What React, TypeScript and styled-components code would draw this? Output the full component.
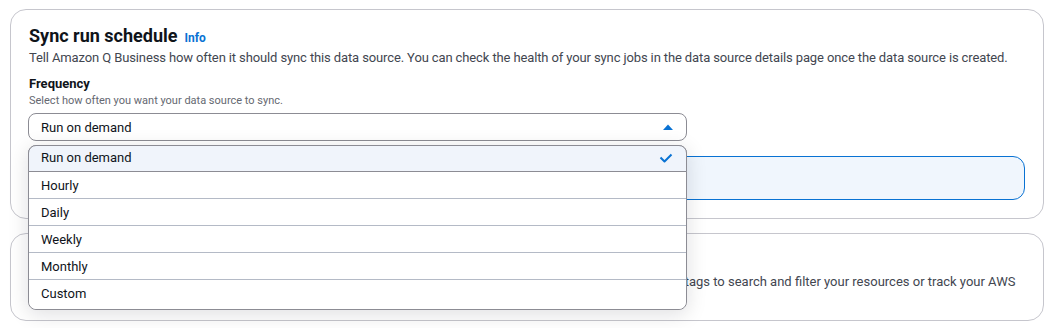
import React from "react";
import styled, { createGlobalStyle } from "styled-components";

const GlobalStyle = createGlobalStyle`
  html, body { margin: 0; padding: 0; background: #ffffff; }
  body { font-family: Roboto, "Noto Sans", sans-serif; color: #0f141a; }
  * { box-sizing: border-box; }
`;

const Page = styled.div`
  display: flex;
  flex-direction: column;
  gap: 14px;
  padding: 9px 10px;
  width: 1054px;
`;

const Container = styled.section<{ $pb?: number }>`
  position: relative;
  border: 1px solid #c6c6cd;
  border-radius: 16px;
  padding: 14px 18px ${(p) => p.$pb ?? 18}px 18px;
  background: #ffffff;
`;

const HeaderRow = styled.div`
  display: flex;
  align-items: baseline;
  gap: 7px;
`;

const Title = styled.h2`
  margin: 0;
  font-size: 18px;
  line-height: 24px;
  font-weight: 700;
  color: #0f141a;
`;

const InfoLink = styled.a`
  font-size: 12px;
  font-weight: 700;
  color: #0972d3;
  text-decoration: none;
`;

const Description = styled.p<{ $tight?: boolean }>`
  margin: 0;
  font-size: 13px;
  line-height: 20px;
  color: #424650;
  letter-spacing: ${(p) => (p.$tight ? "-0.12px" : "0")};
`;

const Field = styled.div`
  display: flex;
  flex-direction: column;
  margin-top: 7px;
`;

const Label = styled.label`
  font-size: 13px;
  line-height: 18px;
  font-weight: 700;
  color: #0f141a;
`;

const Constraint = styled.span`
  font-size: 11px;
  line-height: 16px;
  color: #656871;
  margin-bottom: 4px;
`;

const SelectWrap = styled.div`
  position: relative;
  width: 659px;
  margin-left: -1px;
`;

const Trigger = styled.button`
  display: flex;
  align-items: center;
  justify-content: space-between;
  width: 100%;
  height: 28px;
  padding: 0 12px;
  border: 1px solid #8c8c94;
  border-radius: 8px;
  background: #ffffff;
  font-family: inherit;
  font-size: 13px;
  color: #0f141a;
  cursor: pointer;
`;

const Menu = styled.ul`
  position: absolute;
  top: 32px;
  left: 0;
  width: 100%;
  margin: 0;
  padding: 0;
  list-style: none;
  background: #ffffff;
  border: 1px solid #8c8c94;
  border-radius: 8px;
  box-shadow: 0 4px 20px 1px rgba(0, 7, 22, 0.12);
  z-index: 10;
`;

const Option = styled.li<{ $selected?: boolean; $last?: boolean }>`
  display: flex;
  align-items: center;
  justify-content: space-between;
  height: ${(p) => (p.$last ? 29 : 27)}px;
  padding: 0 12px;
  font-size: 13px;
  color: #0f141a;
  background: ${(p) => (p.$selected ? "#f0f4fb" : "#ffffff")};
  border-bottom: ${(p) => (p.$last ? "none" : "1px solid #b4bac6")};
  ${(p) =>
    p.$selected
      ? `margin: -1px -1px 0 -1px; border: 1px solid #8c8c94; border-radius: 8px 8px 0 0; padding: 0 12px 2px 12px;`
      : ""}
  ${(p) => (p.$last ? "border-radius: 0 0 8px 8px; padding-bottom: 3px;" : "")}
`;

const Alert = styled.div`
  margin-top: 15px;
  height: 44px;
  border: 1.5px solid #0972d3;
  border-radius: 12px;
  background: #f0f6fd;
`;

const Caret = () => (
  <svg width="12" height="8" viewBox="0 0 12 8" aria-hidden>
    <path d="M1 7 L6 1.5 L11 7 Z" fill="#0972d3" />
  </svg>
);

const Check = () => (
  <svg width="16" height="16" viewBox="0 0 16 16" aria-hidden>
    <path d="M2.5 7.5 L6.5 11.5 L13.5 4.5" fill="none" stroke="#0972d3" strokeWidth="2" strokeLinejoin="round" />
  </svg>
);

const options = ["Run on demand", "Hourly", "Daily", "Weekly", "Monthly", "Custom"];

export default function App() {
  return (
    <>
      <GlobalStyle />
      <Page>
        <Container>
          <HeaderRow>
            <Title>Sync run schedule</Title>
            <InfoLink href="#">Info</InfoLink>
          </HeaderRow>
          <Description $tight>
            Tell Amazon Q Business how often it should sync this data source. You can check the health of your sync jobs in the data source details page once the data source is created.
          </Description>
          <Field>
            <Label>Frequency</Label>
            <Constraint>Select how often you want your data source to sync.</Constraint>
            <SelectWrap>
              <Trigger>
                <span>Run on demand</span>
                <Caret />
              </Trigger>
              <Menu>
                {options.map((o, i) => (
                  <Option key={o} $selected={i === 0} $last={i === options.length - 1}>
                    <span>{o}</span>
                    {i === 0 && <Check />}
                  </Option>
                ))}
              </Menu>
            </SelectWrap>
          </Field>
          <Alert />
        </Container>
        <Container $pb={8}>
          <HeaderRow>
            <Title>Tags - optional</Title>
          </HeaderRow>
          <Description>
            A tag is a label that you assign to an AWS resource. Each tag consists of a key and an optional value. You can use tags to search and filter your resources or track your AWS costs.
          </Description>
        </Container>
      </Page>
    </>
  );
}
